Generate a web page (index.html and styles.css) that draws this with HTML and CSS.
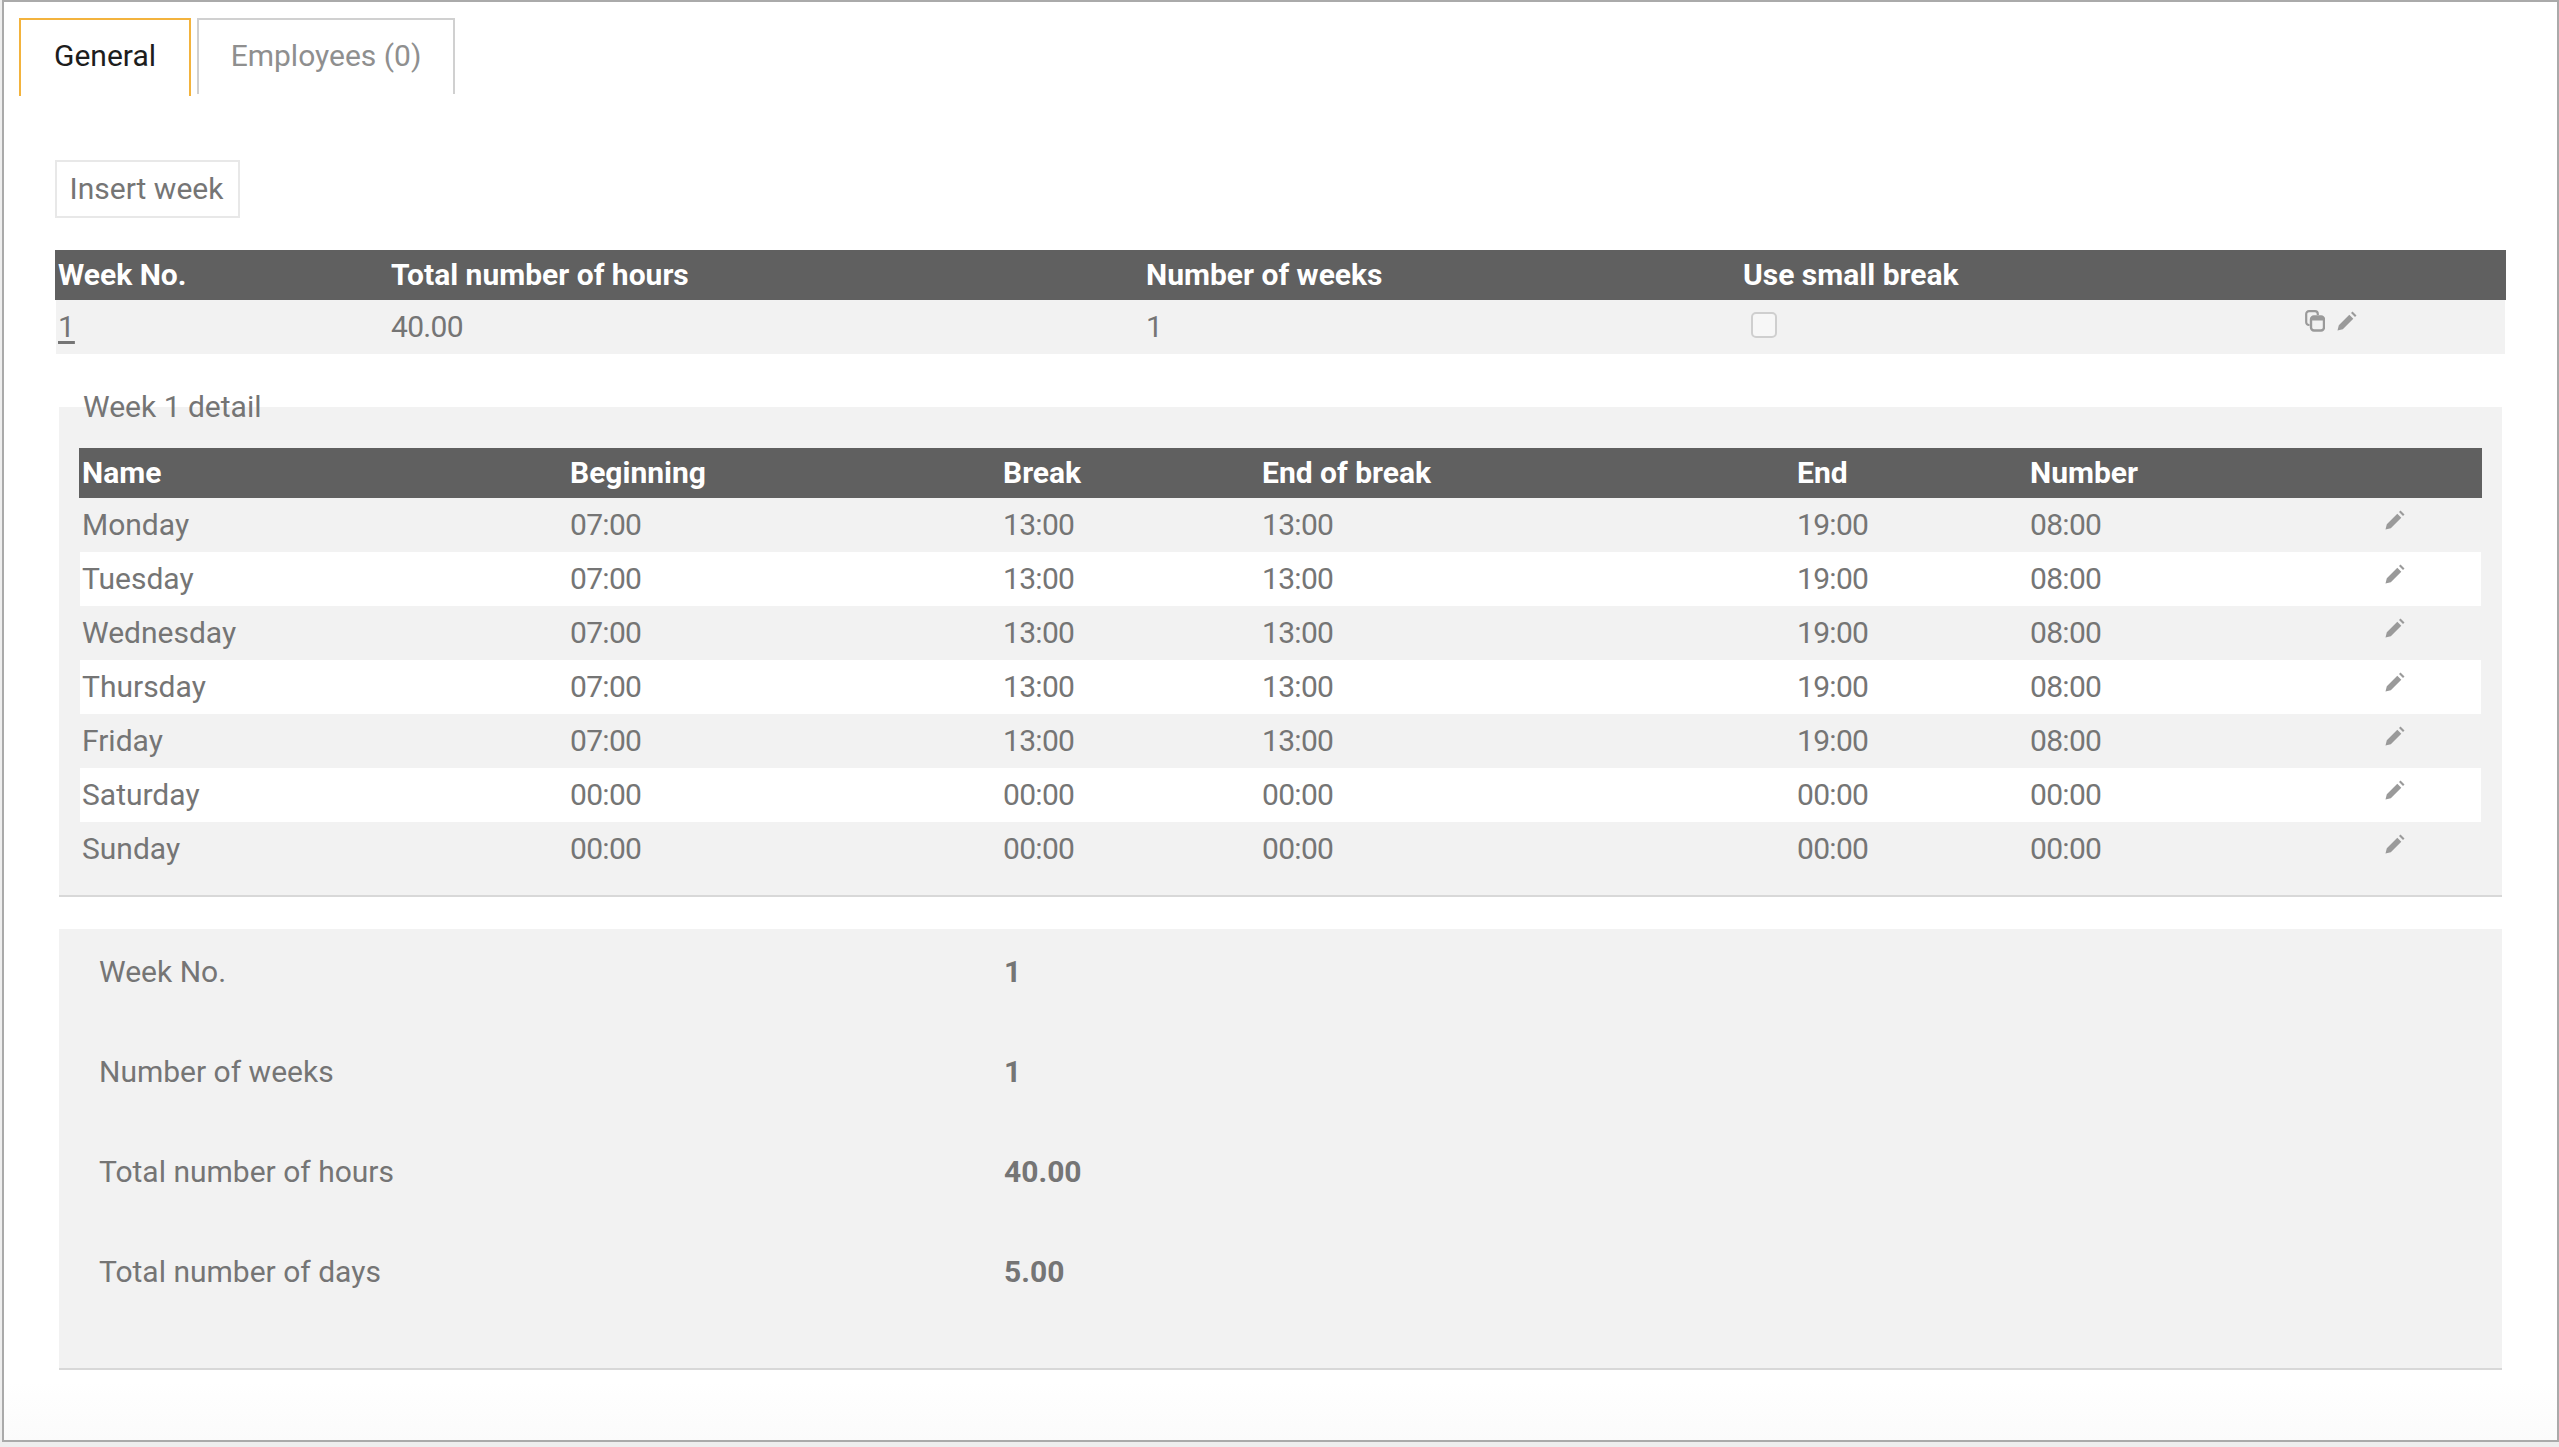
FILE: index.html
```html
<!DOCTYPE html>
<html lang="en">
<head>
<meta charset="utf-8">
<title>Week schedule</title>
<link rel="stylesheet" href="styles.css">
</head>
<body>
<svg class="defs" width="0" height="0" aria-hidden="true">
  <symbol id="pencil" viewBox="0 0 20 20"><path d="M0.500 19.500l1.300-5.300L12.300 3.700l4 4L5.800 18.200z M14 2l1.500-1.500 4 4L18 6z" fill="currentColor"/></symbol>
  <symbol id="copy" viewBox="0 0 20 22"><path d="M4.500 15H4a2.800 2.800 0 0 1-2.800-2.800V4A2.800 2.800 0 0 1 4 1.200h6A2.800 2.800 0 0 1 12.800 4v1" fill="none" stroke="currentColor" stroke-width="2.200"/><rect x="6" y="6.500" width="13" height="14" rx="3" fill="none" stroke="currentColor" stroke-width="2.400"/><rect x="6" y="6.500" width="13" height="4" rx="1.500" fill="currentColor"/></symbol>
</svg>
<div class="frame">
  <nav class="tabs">
    <a class="tab tab-active">General</a>
    <a class="tab">Employees (0)</a>
  </nav>
  <main class="content">
    <button class="btn" type="button">Insert week</button>
    <table class="grid weeks">
      <colgroup><col class="w1"><col class="w2"><col class="w3"><col class="w4"><col class="w5"></colgroup>
      <thead><tr><th>Week No.</th><th>Total number of hours</th><th>Number of weeks</th><th>Use small break</th><th></th></tr></thead>
      <tbody>
        <tr>
          <td><a class="link">1</a></td><td>40.00</td><td>1</td>
          <td><span class="check"></span></td>
          <td class="icons"><svg class="ico ico-copy"><use href="#copy"/></svg><svg class="ico"><use href="#pencil"/></svg></td>
        </tr>
      </tbody>
    </table>
    <fieldset class="detail">
      <legend>Week 1 detail</legend>
      <table class="grid days">
        <colgroup><col class="d1"><col class="d2"><col class="d3"><col class="d4"><col class="d5"><col class="d6"><col class="d7"></colgroup>
        <thead><tr><th>Name</th><th>Beginning</th><th>Break</th><th>End of break</th><th>End</th><th>Number</th><th></th></tr></thead>
        <tbody>
          <tr><td>Monday</td><td>07:00</td><td>13:00</td><td>13:00</td><td>19:00</td><td>08:00</td><td class="icons"><svg class="ico"><use href="#pencil"/></svg></td></tr>
          <tr><td>Tuesday</td><td>07:00</td><td>13:00</td><td>13:00</td><td>19:00</td><td>08:00</td><td class="icons"><svg class="ico"><use href="#pencil"/></svg></td></tr>
          <tr><td>Wednesday</td><td>07:00</td><td>13:00</td><td>13:00</td><td>19:00</td><td>08:00</td><td class="icons"><svg class="ico"><use href="#pencil"/></svg></td></tr>
          <tr><td>Thursday</td><td>07:00</td><td>13:00</td><td>13:00</td><td>19:00</td><td>08:00</td><td class="icons"><svg class="ico"><use href="#pencil"/></svg></td></tr>
          <tr><td>Friday</td><td>07:00</td><td>13:00</td><td>13:00</td><td>19:00</td><td>08:00</td><td class="icons"><svg class="ico"><use href="#pencil"/></svg></td></tr>
          <tr><td>Saturday</td><td>00:00</td><td>00:00</td><td>00:00</td><td>00:00</td><td>00:00</td><td class="icons"><svg class="ico"><use href="#pencil"/></svg></td></tr>
          <tr><td>Sunday</td><td>00:00</td><td>00:00</td><td>00:00</td><td>00:00</td><td>00:00</td><td class="icons"><svg class="ico"><use href="#pencil"/></svg></td></tr>
        </tbody>
      </table>
    </fieldset>
    <section class="summary">
      <div class="sum-row"><span>Week No.</span><b>1</b></div>
      <div class="sum-row"><span>Number of weeks</span><b>1</b></div>
      <div class="sum-row"><span>Total number of hours</span><b>40.00</b></div>
      <div class="sum-row"><span>Total number of days</span><b>5.00</b></div>
    </section>
  </main>
</div>
</body>
</html>
```
FILE: styles.css
```css
* { box-sizing: border-box; }
html, body { margin: 0; padding: 0; background: #eeeeee; }
body {
  width: 2559px;
  height: 1447px;
  overflow: hidden;
  font-family: Roboto, "Liberation Sans", sans-serif;
  font-size: 30px;
  color: #757575;
}
.defs { position: absolute; }
.frame {
  margin-left: 2px;
  width: 2557px;
  height: 1442px;
  border: 2px solid #aaaaaa;
  background: linear-gradient(#ffffff 96%, #fbfbfb);
}
.tabs { display: flex; gap: 6px; padding: 16px 0 0 15px; height: 94px; align-items: flex-start; }
.tab {
  display: flex;
  align-items: center;
  justify-content: center;
  height: 76px;
  border: 2px solid #d0d0d0;
  border-bottom: 0;
  color: #8f8f8f;
  width: 258px;
  padding-bottom: 3px;
}
.tab-active { width: 172px; height: 78px; border-color: #f3b33d; color: #1d1d1d; padding-bottom: 5px; }
.content { padding: 64px 51px 0; }
.btn {
  display: block;
  width: 185px;
  height: 58px;
  padding: 0 2px 2px 0;
  border: 2px solid #e8e8e8;
  background: #ffffff;
  font: inherit;
  color: #757575;
}
.grid { border-collapse: separate; border-spacing: 0; table-layout: fixed; width: 100%; }
.grid th {
  height: 50px;
  padding: 0 0 1px 3px;
  background: #606060;
  color: #ffffff;
  font-weight: 700;
  text-align: left;
}
.grid td { height: 54px; padding: 0 0 1px 3px; }
.grid td:first-child { padding-left: 2px; border-left: 1px solid #ffffff; }
.grid td:last-child { border-right: 1px solid #ffffff; }
.days td:first-child { border-left-color: #f2f2f2; }
.days td:last-child { border-right-color: #f2f2f2; }
.grid td + td { letter-spacing: -0.7px; }
.grid tbody tr:nth-child(odd) td { background: #f2f2f2; }
.grid tbody tr:nth-child(even) td { background: #ffffff; }
.weeks { margin-top: 32px; }
.w1 { width: 333px; } .w2 { width: 755px; } .w3 { width: 597px; } .w4 { width: 561px; } .w5 { width: 205px; }
.d1 { width: 488px; } .d2 { width: 433px; } .d3 { width: 259px; } .d4 { width: 535px; } .d5 { width: 233px; } .d6 { width: 355px; } .d7 { width: 100px; }
.link { text-decoration: underline; text-underline-offset: 4px; }
.check {
  display: block;
  width: 26px;
  height: 26px;
  margin: 0 0 3px 8px;
  border: 2px solid #cfcfcf;
  border-radius: 5px;
  background: #f7f7f7;
}
.icons { white-space: nowrap; color: #9a9a9a; }
.ico { display: inline-block; width: 20px; height: 20px; margin: 0 12px 13px 0; vertical-align: middle; }
.ico-copy { height: 22px; }
.weeks .icons { padding-left: 4px; }
.days .icons { padding-left: 3px; }
.detail {
  margin: 35px 4px 0;
  padding: 23px 20px 19px;
  border: 0;
  border-bottom: 2px solid #d8d8d8;
  background: #f2f2f2;
  min-width: 0;
}
.detail legend { padding: 0; margin-left: 4px; height: 36px; line-height: 36px; }
.summary {
  margin: 32px 4px 0;
  height: 441px;
  padding: 0 0 0 40px;
  background: #f2f2f2;
  border-bottom: 2px solid #d8d8d8;
}
.sum-row { display: grid; grid-template-columns: 905px 1fr; align-items: center; height: 100px; padding-bottom: 16px; }
.sum-row b { font-weight: 700; }
```
